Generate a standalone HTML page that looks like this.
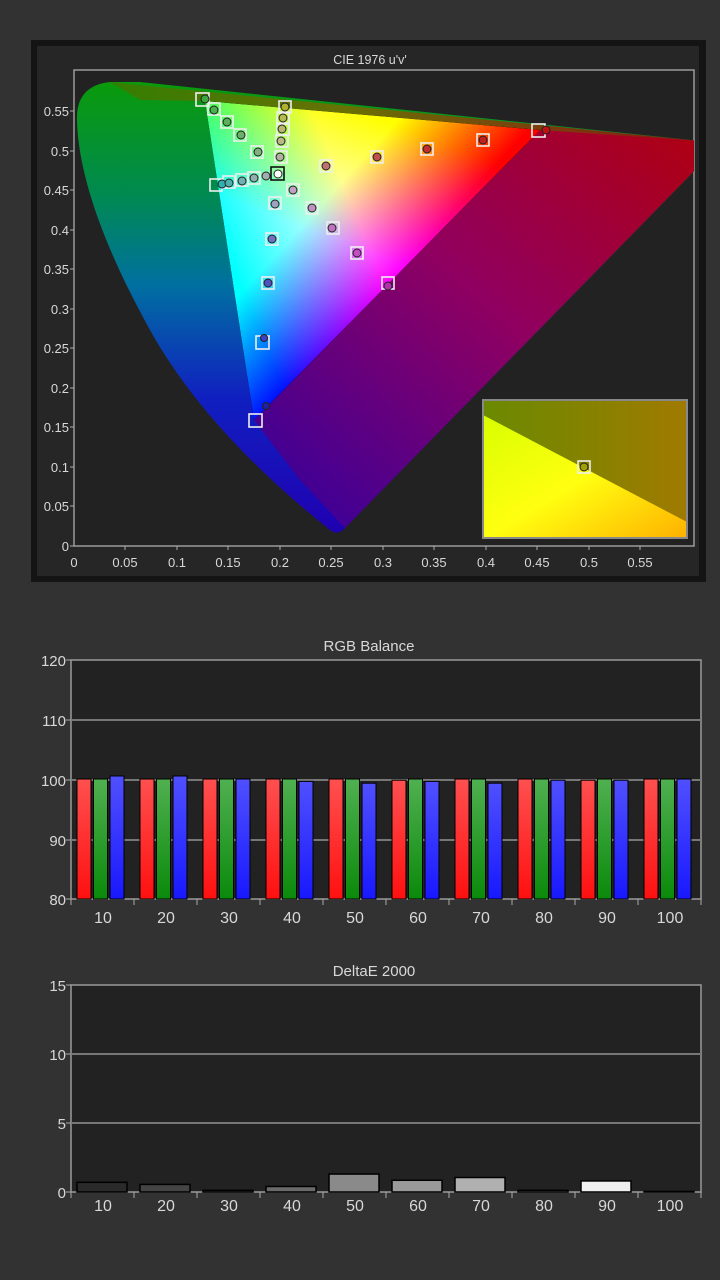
<!DOCTYPE html>
<html><head><meta charset="utf-8"><style>
html,body{margin:0;padding:0;background:#323232;}
svg{display:block}
text{font-family:"Liberation Sans",sans-serif;fill:#d8d8d8;}
</style></head><body>
<svg width="720" height="1280" viewBox="0 0 720 1280" xmlns="http://www.w3.org/2000/svg">
<defs>
<linearGradient id="hs" x1="0" y1="0" x2="0" y2="1">
<stop offset="0" stop-color="#0a9a0a"/><stop offset="0.25" stop-color="#008a50"/><stop offset="0.45" stop-color="#0070a0"/><stop offset="0.7" stop-color="#1020c0"/><stop offset="1" stop-color="#2000b0"/></linearGradient>
<linearGradient id="rr" x1="1" y1="0" x2="0" y2="1">
<stop offset="0" stop-color="#b00010"/><stop offset="0.45" stop-color="#900060"/><stop offset="1" stop-color="#3000a0"/></linearGradient>
<linearGradient id="tb" x1="0" y1="0" x2="1" y2="0">
<stop offset="0" stop-color="#3a7a00"/><stop offset="0.4" stop-color="#7a6a00"/><stop offset="1" stop-color="#a00010"/></linearGradient>
<linearGradient id="gG" gradientUnits="userSpaceOnUse" x1="205" y1="101" x2="397" y2="275"><stop offset="0" stop-color="#00ff00"/><stop offset="0.6" stop-color="#00ff00"/><stop offset="1" stop-color="#000"/></linearGradient>
<linearGradient id="gR" gradientUnits="userSpaceOnUse" x1="540" y1="130" x2="229" y2="260"><stop offset="0" stop-color="#ff0000"/><stop offset="0.6" stop-color="#ff0000"/><stop offset="1" stop-color="#000"/></linearGradient>
<linearGradient id="gB" gradientUnits="userSpaceOnUse" x1="254" y1="420" x2="372" y2="115"><stop offset="0" stop-color="#0000ff"/><stop offset="0.6" stop-color="#0000ff"/><stop offset="1" stop-color="#000"/></linearGradient>
<linearGradient id="inU" x1="0" y1="0" x2="1" y2="0"><stop offset="0" stop-color="#6a8a00"/><stop offset="1" stop-color="#a07a00"/></linearGradient>
<linearGradient id="inL" x1="0" y1="0" x2="1" y2="1"><stop offset="0" stop-color="#d8ff00"/><stop offset="0.5" stop-color="#ffff10"/><stop offset="1" stop-color="#ffb000"/></linearGradient>
<linearGradient id="rb" x1="0" y1="0" x2="0" y2="1"><stop offset="0" stop-color="#ff5050"/><stop offset="1" stop-color="#ff1010"/></linearGradient>
<linearGradient id="gb" x1="0" y1="0" x2="0" y2="1"><stop offset="0" stop-color="#50b050"/><stop offset="1" stop-color="#0a8a0a"/></linearGradient>
<linearGradient id="bb" x1="0" y1="0" x2="0" y2="1"><stop offset="0" stop-color="#5050ff"/><stop offset="1" stop-color="#1818ff"/></linearGradient>
<clipPath id="pc"><rect x="74" y="70" width="620" height="476"/></clipPath>
</defs>

<rect x="31" y="40" width="675" height="542" fill="#141414"/>
<rect x="37" y="46" width="662" height="530" fill="#262626"/>
<text x="370" y="64" font-size="12.5" text-anchor="middle">CIE 1976 u'v'</text>
<rect x="74" y="70" width="620" height="476" fill="#222" stroke="#9a9a9a" stroke-width="1.5"/>
<g clip-path="url(#pc)">
<path d="M110,82 C90,84 76,95 77,120 C78,170 100,240 150,330 C200,420 280,490 330,530 Q338,536 345,528 L700,165 L700,141 L140,82 Z" fill="url(#hs)"/>
<path d="M110,82 L700,141 L700,150 L540,130 L205,101 L140,100 Z" fill="url(#tb)" opacity="0.85"/>
<path d="M540,130 L700,141 L700,165 L345,528 L300,480 L254,420 Z" fill="url(#rr)"/>
<g style="isolation:isolate">
<polygon points="205,101 540,130 254,420" fill="#000"/>
<polygon points="205,101 540,130 254,420" fill="url(#gG)" style="mix-blend-mode:screen"/>
<polygon points="205,101 540,130 254,420" fill="url(#gR)" style="mix-blend-mode:screen"/>
<polygon points="205,101 540,130 254,420" fill="url(#gB)" style="mix-blend-mode:screen"/>
</g>
</g>
<g stroke="#aaa" stroke-width="1">
<line x1="70" y1="111" x2="74" y2="111"/><line x1="70" y1="151" x2="74" y2="151"/><line x1="70" y1="190" x2="74" y2="190"/><line x1="70" y1="230" x2="74" y2="230"/><line x1="70" y1="269" x2="74" y2="269"/><line x1="70" y1="309" x2="74" y2="309"/><line x1="70" y1="348" x2="74" y2="348"/><line x1="70" y1="388" x2="74" y2="388"/><line x1="70" y1="427" x2="74" y2="427"/><line x1="70" y1="467" x2="74" y2="467"/><line x1="70" y1="506" x2="74" y2="506"/><line x1="70" y1="546" x2="74" y2="546"/>
<line x1="125" y1="546" x2="125" y2="550"/><line x1="177" y1="546" x2="177" y2="550"/><line x1="228" y1="546" x2="228" y2="550"/><line x1="280" y1="546" x2="280" y2="550"/><line x1="331" y1="546" x2="331" y2="550"/><line x1="383" y1="546" x2="383" y2="550"/><line x1="434" y1="546" x2="434" y2="550"/><line x1="486" y1="546" x2="486" y2="550"/><line x1="537" y1="546" x2="537" y2="550"/><line x1="589" y1="546" x2="589" y2="550"/><line x1="640" y1="546" x2="640" y2="550"/>
</g>
<g font-size="13" text-anchor="end">
<text x="69" y="116">0.55</text><text x="69" y="156">0.5</text><text x="69" y="195">0.45</text><text x="69" y="235">0.4</text><text x="69" y="274">0.35</text><text x="69" y="314">0.3</text><text x="69" y="353">0.25</text><text x="69" y="393">0.2</text><text x="69" y="432">0.15</text><text x="69" y="472">0.1</text><text x="69" y="511">0.05</text><text x="69" y="551">0</text>
</g>
<g font-size="13" text-anchor="middle">
<text x="74" y="567">0</text><text x="125" y="567">0.05</text><text x="177" y="567">0.1</text><text x="228" y="567">0.15</text><text x="280" y="567">0.2</text><text x="331" y="567">0.25</text><text x="383" y="567">0.3</text><text x="434" y="567">0.35</text><text x="486" y="567">0.4</text><text x="537" y="567">0.45</text><text x="589" y="567">0.5</text><text x="640" y="567">0.55</text>
</g>
<g fill="none" stroke="#eee" stroke-width="1.6">
<rect x="196" y="93" width="13" height="13"/><rect x="208" y="103" width="12" height="12"/><rect x="221" y="116" width="12" height="12"/><rect x="234" y="129" width="12" height="12"/><rect x="251" y="146" width="12" height="12"/>
<rect x="210" y="179" width="12" height="12"/><rect x="223" y="176" width="12" height="12"/><rect x="236" y="174" width="12" height="12"/><rect x="248" y="172" width="12" height="12"/>
<rect x="279" y="101" width="12" height="12"/><rect x="277" y="112" width="12" height="12"/><rect x="277" y="123" width="12" height="12"/><rect x="276" y="135" width="12" height="12"/><rect x="275" y="151" width="12" height="12"/>
<rect x="287" y="184" width="12" height="12"/><rect x="269" y="197" width="12" height="12"/><rect x="306" y="202" width="12" height="12"/><rect x="327" y="222" width="12" height="12"/><rect x="351" y="247" width="12" height="12"/><rect x="382" y="277" width="12" height="12"/>
<rect x="266" y="233" width="12" height="12"/><rect x="262" y="277" width="12" height="12"/><rect x="256" y="336" width="13" height="13"/><rect x="249" y="414" width="13" height="13"/>
<rect x="320" y="160" width="12" height="12"/><rect x="371" y="151" width="12" height="12"/><rect x="421" y="143" width="12" height="12"/><rect x="477" y="134" width="12" height="12"/><rect x="532" y="124" width="13" height="13"/>
</g>
<rect x="271" y="167" width="13" height="13" fill="none" stroke="#111" stroke-width="1.6"/>
<g stroke="#222" stroke-width="1">
<circle cx="205" cy="99" r="4" fill="#3aa83a"/><circle cx="214" cy="110" r="4" fill="#4ab04a"/><circle cx="227" cy="122" r="4" fill="#5ab05a"/><circle cx="241" cy="135" r="4" fill="#6ab06a"/><circle cx="258" cy="152" r="4" fill="#80b080"/>
<circle cx="222" cy="184" r="4" fill="#30b0b0"/><circle cx="229" cy="183" r="4" fill="#50b0b0"/><circle cx="242" cy="181" r="4" fill="#70b0b0"/><circle cx="254" cy="178" r="4" fill="#90b0b0"/><circle cx="266" cy="176" r="4" fill="#a0b0b0"/><circle cx="278" cy="174" r="4" fill="#fff"/>
<circle cx="285" cy="107" r="4" fill="#b0b030"/><circle cx="283" cy="118" r="4" fill="#b8b850"/><circle cx="282" cy="129" r="4" fill="#b8b870"/><circle cx="281" cy="141" r="4" fill="#b8b888"/><circle cx="280" cy="157" r="4" fill="#b0b0a0"/>
<circle cx="293" cy="190" r="4" fill="#c0a0c0"/><circle cx="275" cy="204" r="4" fill="#a0a0c0"/><circle cx="312" cy="208" r="4" fill="#c090c0"/><circle cx="332" cy="228" r="4" fill="#c070c0"/><circle cx="357" cy="253" r="4" fill="#c050c0"/><circle cx="388" cy="286" r="4" fill="#b030b0"/>
<circle cx="272" cy="239" r="4" fill="#7070c0"/><circle cx="268" cy="283" r="4" fill="#5050c0"/><circle cx="264" cy="338" r="3.5" fill="#4040c0"/><circle cx="266" cy="406" r="3.5" fill="#2020a0"/>
<circle cx="326" cy="166" r="4" fill="#c07070"/><circle cx="377" cy="157" r="4" fill="#c05050"/><circle cx="427" cy="149" r="4" fill="#c03030"/><circle cx="483" cy="140" r="4" fill="#c02020"/><circle cx="546" cy="130" r="4" fill="#c01010"/>
</g>
<rect x="483" y="400" width="204" height="138" fill="url(#inU)"/>
<polygon points="483,415 687,522 687,538 483,538" fill="url(#inL)"/>
<rect x="483" y="400" width="204" height="138" fill="none" stroke="#888" stroke-width="2"/>
<rect x="578" y="461" width="12" height="12" fill="none" stroke="#eee" stroke-width="1.6"/>
<circle cx="584" cy="467" r="4" fill="#a0a000" stroke="#222"/>

<text x="369" y="651" font-size="15" text-anchor="middle">RGB Balance</text>
<rect x="71" y="660" width="630" height="239" fill="#222" stroke="#9a9a9a" stroke-width="1.5"/>
<g stroke="#777" stroke-width="2"><line x1="71" y1="720" x2="701" y2="720"/><line x1="71" y1="780" x2="701" y2="780"/><line x1="71" y1="840" x2="701" y2="840"/></g>
<g font-size="15" text-anchor="end"><text x="66" y="666">120</text><text x="66" y="726">110</text><text x="66" y="786">100</text><text x="66" y="846">90</text><text x="66" y="905">80</text></g>
<g stroke="#aaa"><line x1="66" y1="660" x2="71" y2="660"/><line x1="66" y1="720" x2="71" y2="720"/><line x1="66" y1="780" x2="71" y2="780"/><line x1="66" y1="840" x2="71" y2="840"/><line x1="66" y1="899" x2="71" y2="899"/></g>
<g id="rgbbars" stroke="#000" stroke-width="1"></g>
<g font-size="16" text-anchor="middle">
<text x="103" y="923">10</text><text x="166" y="923">20</text><text x="229" y="923">30</text><text x="292" y="923">40</text><text x="355" y="923">50</text><text x="418" y="923">60</text><text x="481" y="923">70</text><text x="544" y="923">80</text><text x="607" y="923">90</text><text x="670" y="923">100</text>
</g>

<text x="374" y="976" font-size="15" text-anchor="middle">DeltaE 2000</text>
<rect x="71" y="985" width="630" height="207" fill="#222" stroke="#9a9a9a" stroke-width="1.5"/>
<g stroke="#777" stroke-width="2"><line x1="71" y1="1054" x2="701" y2="1054"/><line x1="71" y1="1123" x2="701" y2="1123"/></g>
<g font-size="15" text-anchor="end"><text x="66" y="991">15</text><text x="66" y="1060">10</text><text x="66" y="1129">5</text><text x="66" y="1198">0</text></g>
<g stroke="#aaa"><line x1="66" y1="985" x2="71" y2="985"/><line x1="66" y1="1054" x2="71" y2="1054"/><line x1="66" y1="1123" x2="71" y2="1123"/><line x1="66" y1="1192" x2="71" y2="1192"/></g>
<g id="debars" stroke="#000" stroke-width="1.5"></g>
<g font-size="16" text-anchor="middle">
<text x="103" y="1211">10</text><text x="166" y="1211">20</text><text x="229" y="1211">30</text><text x="292" y="1211">40</text><text x="355" y="1211">50</text><text x="418" y="1211">60</text><text x="481" y="1211">70</text><text x="544" y="1211">80</text><text x="607" y="1211">90</text><text x="670" y="1211">100</text>
</g>
<g stroke="#aaa"><line x1="71" y1="899" x2="71" y2="905"/><line x1="71" y1="1192" x2="71" y2="1198"/></g>
<g id="xt" stroke="#aaa"></g>
</svg>
<script>
var NS="http://www.w3.org/2000/svg";
function el(p,t,a){var e=document.createElementNS(NS,t);for(var k in a)e.setAttribute(k,a[k]);p.appendChild(e);return e;}
var R=[100,100,100,100,100,99.8,100,100,99.8,100],G=[100,100,100,100,100,100,100,100,100,100],B=[100.5,100.5,100,99.6,99.3,99.6,99.3,99.8,99.8,100];
var g=document.getElementById("rgbbars");
for(var i=0;i<10;i++){var x=71+i*63+6;
[[R,"url(#rb)"],[G,"url(#gb)"],[B,"url(#bb)"]].forEach(function(c,j){var v=c[0][i];var y=899-(v-80)*6;el(g,"rect",{x:x+j*16.5,y:y,width:14,height:899-y,fill:c[1]});});}
var D=[0.7,0.55,0.12,0.4,1.3,0.85,1.05,0.12,0.8,0.04],C=["#2a2a2a","#444","#666","#6a6a6a","#8a8a8a","#9a9a9a","#b0b0b0","#aaa","#eee","#888"];
var d=document.getElementById("debars");
for(var i=0;i<10;i++){var h=D[i]*13.8;el(d,"rect",{x:71+i*63+6,y:1192-h,width:50,height:h,fill:C[i]});}
var xt=document.getElementById("xt");
for(var i=1;i<=10;i++){var x=71+i*63;el(xt,"line",{x1:x,y1:899,x2:x,y2:905});el(xt,"line",{x1:x,y1:1192,x2:x,y2:1198});}
</script>
</body></html>
